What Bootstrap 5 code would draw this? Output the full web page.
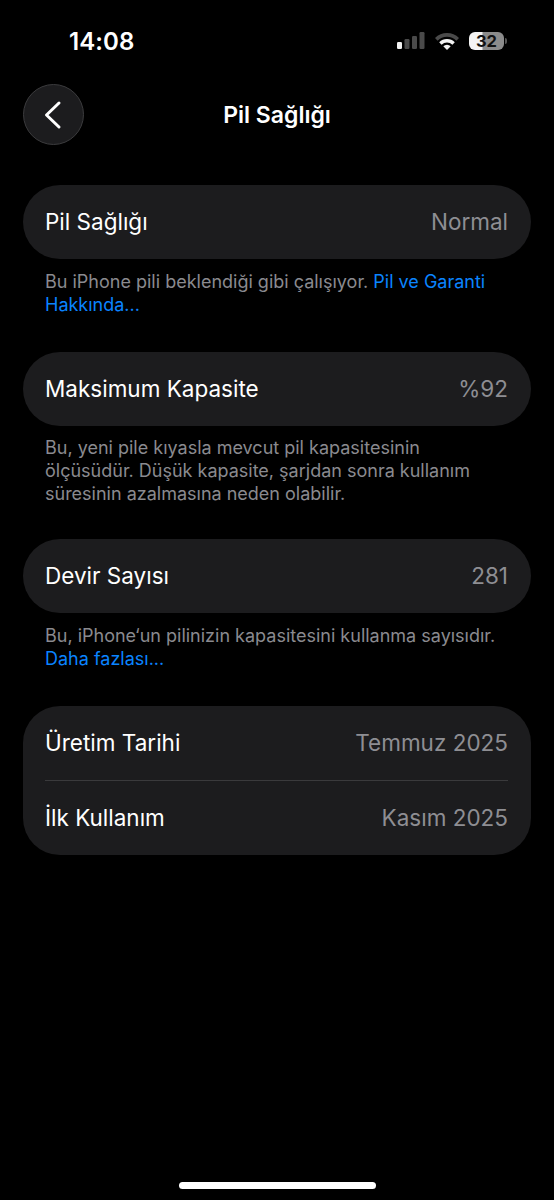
<!doctype html>
<html lang="tr">
<head>
<meta charset="utf-8">
<link href="https://cdn.jsdelivr.net/npm/bootstrap@5.3.0/dist/css/bootstrap.min.css" rel="stylesheet">
<style>
html,body{background:#000;height:1200px;overflow:hidden}
body{font-family:Inter,"Liberation Sans",sans-serif;color:#fff;display:flex;flex-direction:column;height:1200px}
.sbar{height:83px;padding:29px 47px 0 69px}
.clock{font-size:24px;font-weight:600;line-height:26px;letter-spacing:.1px}
.stat{height:27px;gap:10px;margin-top:-2px}
.batt{width:35px;height:18px;border-radius:6px;background:linear-gradient(90deg,#f4f4f4 0 37%,#8b8b8b 40%);color:#111;font-size:16.5px;font-weight:700;line-height:18px;text-align:center}
.bnub{width:2px;height:6px;background:#555;border-radius:0 2px 2px 0;margin-left:1px}
.hdr{height:62px;padding:0 23px}
.backb{width:61px;height:61px;margin-top:1px;border-radius:50%;background:#1c1c1e;border:1px solid #3b3b3d}
.ttl{font-size:23px;font-weight:600;left:0;right:0;top:1px;line-height:62px;text-align:center;pointer-events:none}
.wrap{padding:40px 23px 0}
.grp{background:#1c1c1e;border-radius:37px;padding:0 23px 0 22px}
.rw{height:74px;font-size:22.5px;line-height:28px}
.vl{color:#8e8e93}
.rule{height:1px;background:#3a3a3c}
.nt{color:#8a8a8f;font-size:18px;line-height:23px;padding:11px 22px 0;height:93px;margin:0}
.nt.tall{padding-top:10px;height:113px}
.nt a{color:#0a84ff;text-decoration:none}
.hbar{width:197px;height:7px;border-radius:4px;background:#fff;margin:auto auto 11px}
</style>
</head>
<body>
<div class="sbar d-flex justify-content-between">
  <div class="clock">14:08</div>
  <div class="stat d-flex align-items-center align-self-start">
    <svg width="28" height="17" viewBox="0 0 28 17"><rect x="0" y="10" width="5" height="7" rx="1.2" fill="#f2f2f2"/><rect x="7.500" y="7" width="5" height="10" rx="1.2" fill="#4a4a4a"/><rect x="15" y="4" width="5" height="13" rx="1.2" fill="#4a4a4a"/><rect x="22.500" y="0" width="5" height="17" rx="1.2" fill="#4a4a4a"/></svg>
    <svg width="24" height="18" viewBox="0 0 24 18"><path d="M0 6a17 17 0 0 1 24 0l-2.600 2.700a13.300 13.300 0 0 0-18.800 0z" fill="#4a4a4a"/><path d="M4.200 10.300a11 11 0 0 1 15.600 0l-2.400 2.500a7.600 7.600 0 0 0-10.800 0z" fill="#f2f2f2"/><path d="M8.300 14.300a5.200 5.200 0 0 1 7.400 0L12 18z" fill="#f2f2f2"/></svg>
    <div class="d-flex align-items-center"><div class="batt">32</div><div class="bnub"></div></div>
  </div>
</div>
<div class="hdr position-relative">
  <div class="backb d-flex align-items-center justify-content-center">
    <svg width="20" height="30" viewBox="0 0 20 30"><path d="M15 3 2.500 15 15 27" fill="none" stroke="#fff" stroke-width="3" stroke-linecap="round" stroke-linejoin="round"/></svg>
  </div>
  <div class="ttl position-absolute">Pil Sağlığı</div>
</div>
<div class="wrap">
  <div class="grp"><div class="rw d-flex justify-content-between align-items-center"><span>Pil Sağlığı</span><span class="vl">Normal</span></div></div>
  <p class="nt">Bu iPhone pili beklendiği gibi çalışıyor. <a href="#">Pil ve Garanti Hakkında...</a></p>
  <div class="grp"><div class="rw d-flex justify-content-between align-items-center"><span>Maksimum Kapasite</span><span class="vl">%92</span></div></div>
  <p class="nt tall">Bu, yeni pile kıyasla mevcut pil kapasitesinin ölçüsüdür. Düşük kapasite, şarjdan sonra kullanım süresinin azalmasına neden olabilir.</p>
  <div class="grp"><div class="rw d-flex justify-content-between align-items-center"><span>Devir Sayısı</span><span class="vl">281</span></div></div>
  <p class="nt">Bu, iPhone‘un pilinizin kapasitesini kullanma sayısıdır. <a href="#">Daha fazlası...</a></p>
  <div class="grp">
    <div class="rw d-flex justify-content-between align-items-center"><span>Üretim Tarihi</span><span class="vl">Temmuz 2025</span></div>
    <div class="rule"></div>
    <div class="rw d-flex justify-content-between align-items-center"><span>İlk Kullanım</span><span class="vl">Kasım 2025</span></div>
  </div>
</div>
<div class="hbar"></div>
<script src="https://cdn.jsdelivr.net/npm/bootstrap@5.3.0/dist/js/bootstrap.bundle.min.js"></script>
</body>
</html>
